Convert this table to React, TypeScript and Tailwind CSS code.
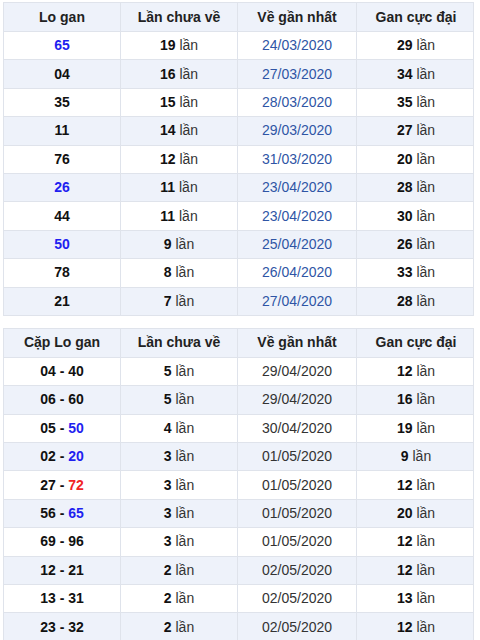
import React from 'react'

type Num = { v: string; c?: 'blue' | 'red' }

interface Row {
  lo: Num[]
  chua: string
  date: string
  max: string
}

const loGan: Row[] = [
  { lo: [{ v: '65', c: 'blue' }], chua: '19', date: '24/03/2020', max: '29' },
  { lo: [{ v: '04' }], chua: '16', date: '27/03/2020', max: '34' },
  { lo: [{ v: '35' }], chua: '15', date: '28/03/2020', max: '35' },
  { lo: [{ v: '11' }], chua: '14', date: '29/03/2020', max: '27' },
  { lo: [{ v: '76' }], chua: '12', date: '31/03/2020', max: '20' },
  { lo: [{ v: '26', c: 'blue' }], chua: '11', date: '23/04/2020', max: '28' },
  { lo: [{ v: '44' }], chua: '11', date: '23/04/2020', max: '30' },
  { lo: [{ v: '50', c: 'blue' }], chua: '9', date: '25/04/2020', max: '26' },
  { lo: [{ v: '78' }], chua: '8', date: '26/04/2020', max: '33' },
  { lo: [{ v: '21' }], chua: '7', date: '27/04/2020', max: '28' },
]

const capLo: Row[] = [
  { lo: [{ v: '04' }, { v: '40' }], chua: '5', date: '29/04/2020', max: '12' },
  { lo: [{ v: '06' }, { v: '60' }], chua: '5', date: '29/04/2020', max: '16' },
  { lo: [{ v: '05' }, { v: '50', c: 'blue' }], chua: '4', date: '30/04/2020', max: '19' },
  { lo: [{ v: '02' }, { v: '20', c: 'blue' }], chua: '3', date: '01/05/2020', max: '9' },
  { lo: [{ v: '27' }, { v: '72', c: 'red' }], chua: '3', date: '01/05/2020', max: '12' },
  { lo: [{ v: '56' }, { v: '65', c: 'blue' }], chua: '3', date: '01/05/2020', max: '20' },
  { lo: [{ v: '69' }, { v: '96' }], chua: '3', date: '01/05/2020', max: '12' },
  { lo: [{ v: '12' }, { v: '21' }], chua: '2', date: '02/05/2020', max: '12' },
  { lo: [{ v: '13' }, { v: '31' }], chua: '2', date: '02/05/2020', max: '13' },
  { lo: [{ v: '23' }, { v: '32' }], chua: '2', date: '02/05/2020', max: '12' },
]

const numColor = (c?: Num['c']) =>
  c === 'blue' ? 'text-[#1f1ff0]' : c === 'red' ? 'text-[#f02424]' : 'text-[#111]'

const cols = 'grid grid-cols-[117px_117px_119px_118px]'
const cell = 'flex items-center justify-center border-r border-[#dfe3eb] last:border-r-0'

function Lan({ n }: { n: string }) {
  return (
    <span>
      <b className="font-bold text-[#111]">{n}</b>
      <span className="text-[#333]"> lần</span>
    </span>
  )
}

function Table({ first, rows, dateClass }: { first: string; rows: Row[]; dateClass: string }) {
  const heads = [first, 'Lần chưa về', 'Về gần nhất', 'Gan cực đại']
  return (
    <div className="w-[471px] border border-[#dfe3eb]">
      <div className={`${cols} h-[28px] bg-[#eef2fa] font-bold text-[#222]`}>
        {heads.map((h) => (
          <div key={h} className={cell}>
            {h}
          </div>
        ))}
      </div>
      {rows.map((r, i) => (
        <div
          key={i}
          className={`${cols} h-[28.4px] border-t border-[#dfe3eb] ${i % 2 ? 'bg-[#eef2fa]' : 'bg-white'}`}
        >
          <div className={`${cell} font-bold`}>
            {r.lo.map((n, j) => (
              <React.Fragment key={j}>
                {j > 0 && <span className="text-[#111]">&nbsp;-&nbsp;</span>}
                <span className={numColor(n.c)}>{n.v}</span>
              </React.Fragment>
            ))}
          </div>
          <div className={cell}>
            <Lan n={r.chua} />
          </div>
          <div className={`${cell} ${dateClass}`}>{r.date}</div>
          <div className={cell}>
            <Lan n={r.max} />
          </div>
        </div>
      ))}
    </div>
  )
}

export default function App() {
  return (
    <div className="w-[480px] h-[640px] overflow-hidden bg-white pl-[3px] pt-[2px] font-['Liberation_Sans',Arial,sans-serif] text-[14px]">
      <Table first="Lo gan" rows={loGan} dateClass="text-[#2f55a5]" />
      <div className="h-[12px]" />
      <Table first="Cặp Lo gan" rows={capLo} dateClass="text-[#333]" />
    </div>
  )
}
